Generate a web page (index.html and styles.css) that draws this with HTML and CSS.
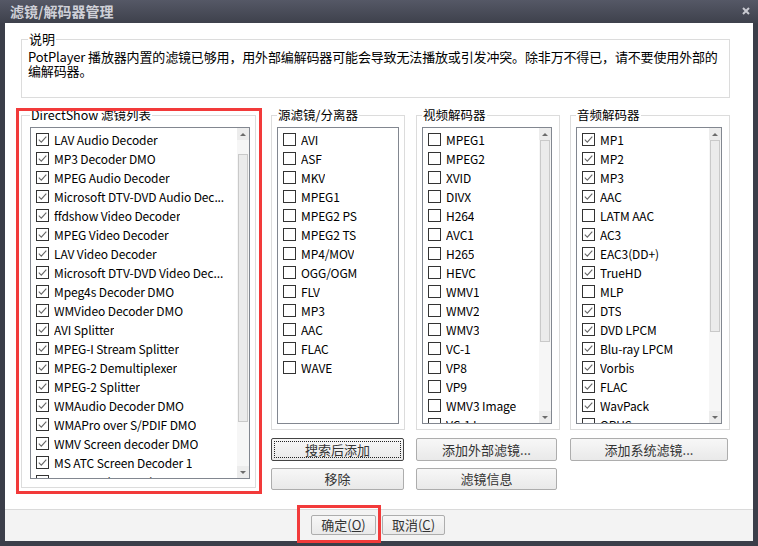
FILE: index.html
```html
<!DOCTYPE html>
<html lang="zh-CN">
<head>
<meta charset="utf-8">
<title>滤镜/解码器管理</title>
<link rel="stylesheet" href="styles.css">
</head>
<body>
<div class="window">
  <div class="titlebar">
    <span class="title">滤镜/解码器管理</span>
    <svg class="close" viewBox="0 0 8 8"><path d="M1 1L7 7M7 1L1 7" stroke="#c9cad1" stroke-width="2" fill="none"/></svg>
  </div>
  <div class="client">
    <div class="content">
      <fieldset class="group desc">
        <legend>说明</legend>
        <p class="desc-line">PotPlayer 播放器内置的滤镜已够用，用外部编解码器可能会导致无法播放或引发冲突。除非万不得已，请不要使用外部的</p>
        <p class="desc-line">编解码器。</p>
      </fieldset>
      <div class="main">
        <fieldset class="group col-ds">
          <legend>DirectShow 滤镜列表</legend>
          <div class="listbox lb-ds">
            <ul class="items">
              <li class="item"><span class="cb on"></span><span class="label">LAV Audio Decoder</span></li>
              <li class="item"><span class="cb on"></span><span class="label">MP3 Decoder DMO</span></li>
              <li class="item"><span class="cb on"></span><span class="label">MPEG Audio Decoder</span></li>
              <li class="item"><span class="cb on"></span><span class="label">Microsoft DTV-DVD Audio Dec...</span></li>
              <li class="item"><span class="cb on"></span><span class="label">ffdshow Video Decoder</span></li>
              <li class="item"><span class="cb on"></span><span class="label">MPEG Video Decoder</span></li>
              <li class="item"><span class="cb on"></span><span class="label">LAV Video Decoder</span></li>
              <li class="item"><span class="cb on"></span><span class="label">Microsoft DTV-DVD Video Dec...</span></li>
              <li class="item"><span class="cb on"></span><span class="label">Mpeg4s Decoder DMO</span></li>
              <li class="item"><span class="cb on"></span><span class="label">WMVideo Decoder DMO</span></li>
              <li class="item"><span class="cb on"></span><span class="label">AVI Splitter</span></li>
              <li class="item"><span class="cb on"></span><span class="label">MPEG-I Stream Splitter</span></li>
              <li class="item"><span class="cb on"></span><span class="label">MPEG-2 Demultiplexer</span></li>
              <li class="item"><span class="cb on"></span><span class="label">MPEG-2 Splitter</span></li>
              <li class="item"><span class="cb on"></span><span class="label">WMAudio Decoder DMO</span></li>
              <li class="item"><span class="cb on"></span><span class="label">WMAPro over S/PDIF DMO</span></li>
              <li class="item"><span class="cb on"></span><span class="label">WMV Screen decoder DMO</span></li>
              <li class="item"><span class="cb on"></span><span class="label">MS ATC Screen Decoder 1</span></li>
              <li class="item"><span class="cb on"></span><span class="label">WMSpeech Decoder DMO</span></li>
            </ul>
            <div class="scrollbar">
              <div class="arrow up"></div>
              <div class="track"><div class="thumb" style="margin-top:14px;height:268px"></div></div>
              <div class="arrow down"></div>
            </div>
          </div>
        </fieldset>

        <div class="col col-src">
          <fieldset class="group">
            <legend>源滤镜/分离器</legend>
            <div class="listbox lb-sm">
              <ul class="items">
                <li class="item"><span class="cb"></span><span class="label">AVI</span></li>
                <li class="item"><span class="cb"></span><span class="label">ASF</span></li>
                <li class="item"><span class="cb"></span><span class="label">MKV</span></li>
                <li class="item"><span class="cb"></span><span class="label">MPEG1</span></li>
                <li class="item"><span class="cb"></span><span class="label">MPEG2 PS</span></li>
                <li class="item"><span class="cb"></span><span class="label">MPEG2 TS</span></li>
                <li class="item"><span class="cb"></span><span class="label">MP4/MOV</span></li>
                <li class="item"><span class="cb"></span><span class="label">OGG/OGM</span></li>
                <li class="item"><span class="cb"></span><span class="label">FLV</span></li>
                <li class="item"><span class="cb"></span><span class="label">MP3</span></li>
                <li class="item"><span class="cb"></span><span class="label">AAC</span></li>
                <li class="item"><span class="cb"></span><span class="label">FLAC</span></li>
                <li class="item"><span class="cb"></span><span class="label">WAVE</span></li>
              </ul>
            </div>
          </fieldset>
          <button class="btn btn-focus">搜索后添加</button>
          <button class="btn">移除</button>
        </div>

        <div class="col col-vid">
          <fieldset class="group">
            <legend>视频解码器</legend>
            <div class="listbox lb-sm">
              <ul class="items">
                <li class="item"><span class="cb"></span><span class="label">MPEG1</span></li>
                <li class="item"><span class="cb"></span><span class="label">MPEG2</span></li>
                <li class="item"><span class="cb"></span><span class="label">XVID</span></li>
                <li class="item"><span class="cb"></span><span class="label">DIVX</span></li>
                <li class="item"><span class="cb"></span><span class="label">H264</span></li>
                <li class="item"><span class="cb"></span><span class="label">AVC1</span></li>
                <li class="item"><span class="cb"></span><span class="label">H265</span></li>
                <li class="item"><span class="cb"></span><span class="label">HEVC</span></li>
                <li class="item"><span class="cb"></span><span class="label">WMV1</span></li>
                <li class="item"><span class="cb"></span><span class="label">WMV2</span></li>
                <li class="item"><span class="cb"></span><span class="label">WMV3</span></li>
                <li class="item"><span class="cb"></span><span class="label">VC-1</span></li>
                <li class="item"><span class="cb"></span><span class="label">VP8</span></li>
                <li class="item"><span class="cb"></span><span class="label">VP9</span></li>
                <li class="item"><span class="cb"></span><span class="label">WMV3 Image</span></li>
                <li class="item"><span class="cb"></span><span class="label">VC-1 Image</span></li>
              </ul>
              <div class="scrollbar">
                <div class="arrow up"></div>
                <div class="track"><div class="thumb" style="height:202px"></div></div>
                <div class="arrow down"></div>
              </div>
            </div>
          </fieldset>
          <button class="btn">添加外部滤镜...</button>
          <button class="btn">滤镜信息</button>
        </div>

        <div class="col col-aud">
          <fieldset class="group">
            <legend>音频解码器</legend>
            <div class="listbox lb-sm">
              <ul class="items">
                <li class="item"><span class="cb on"></span><span class="label">MP1</span></li>
                <li class="item"><span class="cb on"></span><span class="label">MP2</span></li>
                <li class="item"><span class="cb on"></span><span class="label">MP3</span></li>
                <li class="item"><span class="cb on"></span><span class="label">AAC</span></li>
                <li class="item"><span class="cb"></span><span class="label">LATM AAC</span></li>
                <li class="item"><span class="cb on"></span><span class="label">AC3</span></li>
                <li class="item"><span class="cb on"></span><span class="label">EAC3(DD+)</span></li>
                <li class="item"><span class="cb on"></span><span class="label">TrueHD</span></li>
                <li class="item"><span class="cb"></span><span class="label">MLP</span></li>
                <li class="item"><span class="cb on"></span><span class="label">DTS</span></li>
                <li class="item"><span class="cb on"></span><span class="label">DVD LPCM</span></li>
                <li class="item"><span class="cb on"></span><span class="label">Blu-ray LPCM</span></li>
                <li class="item"><span class="cb on"></span><span class="label">Vorbis</span></li>
                <li class="item"><span class="cb on"></span><span class="label">FLAC</span></li>
                <li class="item"><span class="cb on"></span><span class="label">WavPack</span></li>
                <li class="item"><span class="cb"></span><span class="label">OPUS</span></li>
              </ul>
              <div class="scrollbar">
                <div class="arrow up"></div>
                <div class="track"><div class="thumb" style="height:192px"></div></div>
                <div class="arrow down"></div>
              </div>
            </div>
          </fieldset>
          <button class="btn">添加系统滤镜...</button>
        </div>
      </div>
    </div>
    <div class="footer">
      <button class="fbtn fbtn-ok">确定(<u>O</u>)</button>
      <button class="fbtn fbtn-cancel">取消(<u>C</u>)</button>
    </div>
  </div>
  <div class="mark mark-ds"></div>
  <div class="mark mark-ok"></div>
</div>
</body>
</html>
```
FILE: styles.css
```css
* { box-sizing: border-box; }

body {
  margin: 0;
  background: #3b3e49;
  font-family: "Noto Sans CJK SC", "Noto Sans", sans-serif;
  font-size: 13px;
  color: #000;
}

.window {
  position: relative;
  width: 758px;
  height: 546px;
  background: #3b3e49;
  display: flex;
  flex-direction: column;
  overflow: hidden;
}

.titlebar {
  height: 23px;
  flex: none;
  display: flex;
  align-items: center;
  justify-content: space-between;
  padding: 0 8px 1px 10px;
  background: linear-gradient(#555866, #3e414c);
}

.title {
  color: #cfd0d8;
  font-weight: bold;
  font-size: 14px;
  line-height: 16px;
}

.close { width: 8px; height: 8px; display: block; }

.client {
  flex: 1;
  margin: 0 5px 5px;
  display: flex;
  flex-direction: column;
  background: #fff;
}

.content {
  flex: 1;
  padding: 9px 23px 0 16px;
}

.group {
  margin: 0;
  border: 1px solid #dcdcdc;
  min-width: 0;
}

.group legend {
  padding: 0 1px;
  font-size: 12.5px;
  line-height: 14px;
  color: #000;
}

.desc {
  width: 709px;
  padding: 4px 6px 19px;
}

.desc legend { font-size: 13px; }

.desc-line {
  margin: 0;
  line-height: 14px;
  white-space: nowrap;
  letter-spacing: -0.15px;
}

.main {
  display: flex;
  align-items: flex-start;
  margin-top: 10px;
}

.col-ds {
  width: 235px;
  padding: 5px 5px 8px 8px;
}

.col {
  display: flex;
  flex-direction: column;
}

.col .group { padding: 5px; }

.col-src { width: 134px; margin-left: 15px; }
.col-vid { width: 144px; margin-left: 11px; }
.col-aud { width: 160px; margin-left: 10px; }

.col-vid .group,
.col-aud .group { padding-right: 7px; }

.listbox {
  display: flex;
  border: 1px solid #828790;
  background: #fff;
  overflow: hidden;
}

.lb-ds { height: 352px; }
.lb-sm { height: 297px; }

.items {
  list-style: none;
  margin: 0;
  padding: 2px 0 0 5px;
  flex: 1;
  min-width: 0;
  overflow: hidden;
}

.item {
  height: 19px;
  display: flex;
  align-items: center;
  white-space: nowrap;
}

.cb {
  width: 13px;
  height: 13px;
  flex: none;
  margin-right: 5px;
  border: 1px solid #333;
  background: #fff;
}

.cb.on {
  background:
    url("data:image/svg+xml;utf8,<svg xmlns='http://www.w3.org/2000/svg' viewBox='0 0 11 11'><polyline points='1.8,5.6 4.3,8.1 9.3,2.6' fill='none' stroke='%23666' stroke-width='1.1'/></svg>") center / 11px 11px no-repeat,
    #fff;
}

.label {
  font-size: 12px;
  letter-spacing: -0.1px;
  line-height: 19px;
  overflow: hidden;
}

.scrollbar {
  width: 12px;
  flex: none;
  display: flex;
  flex-direction: column;
  background: #f6f6f6;
}

.arrow {
  height: 12px;
  flex: none;
  display: flex;
  align-items: center;
  justify-content: center;
  background: #ececec;
}

.arrow::before {
  content: "";
  border-left: 3px solid transparent;
  border-right: 3px solid transparent;
}

.arrow.up::before { border-bottom: 3px solid #6c6c6c; }
.arrow.down::before { border-top: 3px solid #6c6c6c; }

.track {
  flex: 1;
  display: flex;
  flex-direction: column;
}

.thumb {
  flex: none;
  margin: 0 1px;
  background: #ebebeb;
  border: 1px solid #c9c9c9;
}

.btn,
.fbtn {
  display: flex;
  align-items: center;
  justify-content: center;
  padding: 0;
  border: 1px solid #adadad;
  border-radius: 2px;
  background: linear-gradient(#f7f7f7, #e9e9e9);
  font: inherit;
  line-height: 14px;
  color: #333;
}

.btn {
  height: 23px;
  margin-top: 8px;
}

.btn + .btn {
  height: 22px;
  margin-top: 7px;
}

.col-src .btn { width: 133px; }
.col-vid .btn { width: 141px; }
.col-aud .btn { width: 158px; }

.btn-focus {
  position: relative;
  border-color: #444;
}

.btn-focus::after {
  content: "";
  position: absolute;
  inset: 2px;
  border: 1px dotted #222;
}

.footer {
  height: 32px;
  flex: none;
  display: flex;
  justify-content: center;
  gap: 6px;
  padding: 5px 2px 0 0;
  border-top: 1px solid #dadada;
  background: #f3f3f3;
}

.fbtn { height: 20px; }
.fbtn-ok { width: 65px; }
.fbtn-cancel { width: 63px; }
.fbtn u { text-decoration-thickness: 1px; text-underline-offset: 1px; }

.mark {
  position: absolute;
  border: 3px solid #f23a3a;
  pointer-events: none;
}

.mark-ds { left: 16px; top: 108px; width: 246px; height: 386px; }
.mark-ok { left: 297px; top: 505px; width: 84px; height: 38px; }
```
